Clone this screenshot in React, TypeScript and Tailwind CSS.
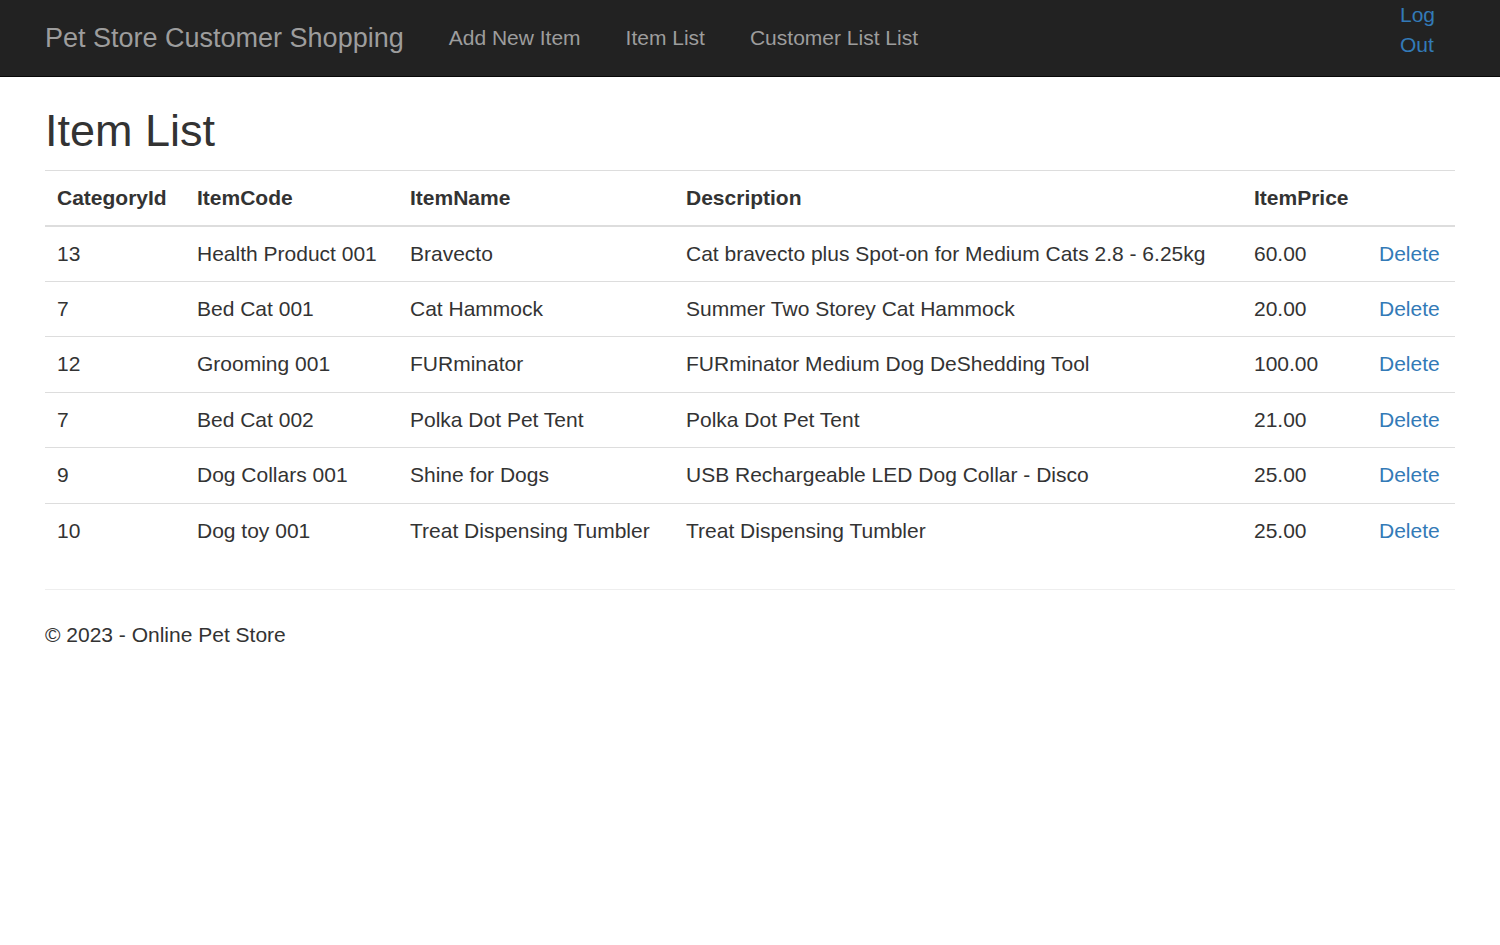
import React from 'react';

interface Item {
  categoryId: number;
  itemCode: string;
  itemName: string;
  description: string;
  itemPrice: string;
}

const items: Item[] = [
  { categoryId: 13, itemCode: 'Health Product 001', itemName: 'Bravecto', description: 'Cat bravecto plus Spot-on for Medium Cats 2.8 - 6.25kg', itemPrice: '60.00' },
  { categoryId: 7, itemCode: 'Bed Cat 001', itemName: 'Cat Hammock', description: 'Summer Two Storey Cat Hammock', itemPrice: '20.00' },
  { categoryId: 12, itemCode: 'Grooming 001', itemName: 'FURminator', description: 'FURminator Medium Dog DeShedding Tool', itemPrice: '100.00' },
  { categoryId: 7, itemCode: 'Bed Cat 002', itemName: 'Polka Dot Pet Tent', description: 'Polka Dot Pet Tent', itemPrice: '21.00' },
  { categoryId: 9, itemCode: 'Dog Collars 001', itemName: 'Shine for Dogs', description: 'USB Rechargeable LED Dog Collar - Disco', itemPrice: '25.00' },
  { categoryId: 10, itemCode: 'Dog toy 001', itemName: 'Treat Dispensing Tumbler', description: 'Treat Dispensing Tumbler', itemPrice: '25.00' },
];

const navLinks = ['Add New Item', 'Item List', 'Customer List List'];

function App() {
  return (
    <div className="min-h-screen bg-white text-[#333] text-[21px] leading-[30px]" style={{ fontFamily: '"Liberation Sans", Arial, sans-serif' }}>
      {/* Navbar */}
      <nav className="h-[77px] bg-[#222] border-b border-[#080808]">
        <div className="flex h-full pl-[45px] pr-[60px]">
          <a href="#" className="self-center text-[27px] leading-[30px] text-[#9d9d9d]">
            Pet Store Customer Shopping
          </a>
          <ul className="flex self-center ml-[45px] gap-[45px]">
            {navLinks.map((link) => (
              <li key={link}>
                <a href="#" className="text-[#9d9d9d]">{link}</a>
              </li>
            ))}
          </ul>
          <a href="#" className="ml-auto self-start w-[40px] text-[#337ab7]">
            Log Out
          </a>
        </div>
      </nav>

      {/* Body content */}
      <div className="px-[45px]">
        <h2 className="mt-[29px] mb-[14px] text-[45px] leading-[49.5px] font-normal">Item List</h2>

        <table className="w-full border-collapse border-t border-[#ddd]">
          <thead>
            <tr className="border-b-2 border-[#ddd] text-left">
              <th className="w-[140px] px-[12px] py-[12px] font-bold">CategoryId</th>
              <th className="w-[213px] px-[12px] py-[12px] font-bold">ItemCode</th>
              <th className="w-[276px] px-[12px] py-[12px] font-bold">ItemName</th>
              <th className="w-[568px] px-[12px] py-[12px] font-bold">Description</th>
              <th className="w-[125px] px-[12px] py-[12px] font-bold">ItemPrice</th>
              <th className="px-[12px] py-[12px]"></th>
            </tr>
          </thead>
          <tbody>
            {items.map((item, i) => (
              <tr key={i} className={i > 0 ? 'border-t border-[#ddd]' : ''}>
                <td className="px-[12px] py-[12px] h-[55.5px]">{item.categoryId}</td>
                <td className="px-[12px] py-[12px]">{item.itemCode}</td>
                <td className="px-[12px] py-[12px]">{item.itemName}</td>
                <td className="px-[12px] py-[12px]">{item.description}</td>
                <td className="px-[12px] py-[12px]">{item.itemPrice}</td>
                <td className="px-[12px] py-[12px]">
                  <a href="#" className="text-[#337ab7]">Delete</a>
                </td>
              </tr>
            ))}
          </tbody>
        </table>

        <hr className="mt-[30px] mb-[30px] border-0 border-t border-[#eee]" />
        <footer>
          <p>© 2023 - Online Pet Store</p>
        </footer>
      </div>
    </div>
  );
}

export default App;
